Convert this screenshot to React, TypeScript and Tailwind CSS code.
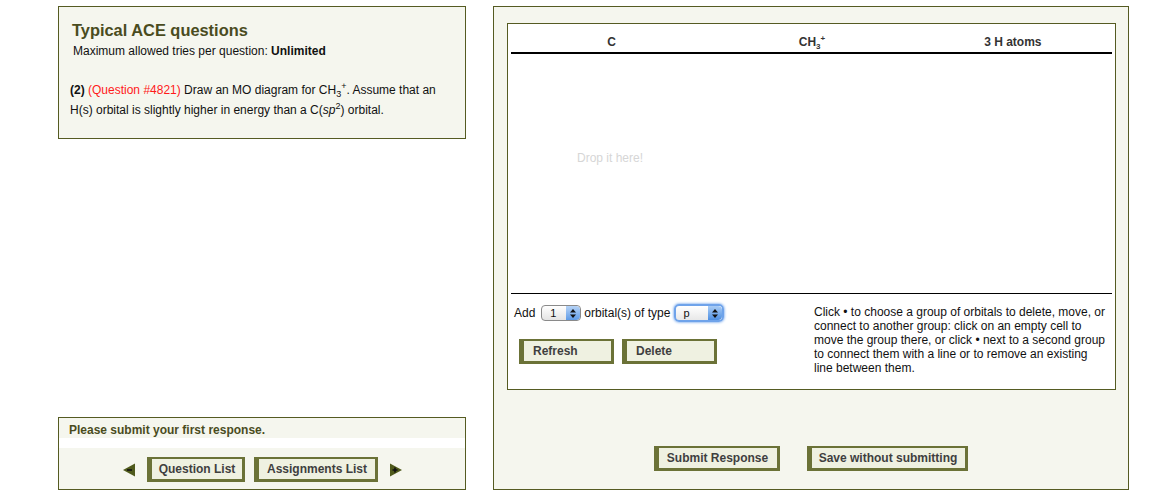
import React from "react";

const font = { fontFamily: '"Liberation Sans", Arial, sans-serif' };

const OliveButton = ({ label, className = "" }: { label: string; className?: string }) => (
  <button
    className={`h-[25px] bg-[#eff1e1] border-[#6b7237] border-l-[5px] border-t-2 border-r-[3px] border-b-[3px] text-[12px] font-bold text-[#3f3f3f] ${className}`}
  >
    {label}
  </button>
);

const Stepper = ({ blue = false }: { blue?: boolean }) => (
  <span
    className={`flex h-full w-[14px] flex-col items-center justify-center rounded-r-[4px] ${
      blue ? "bg-gradient-to-b from-[#a9ccf5] to-[#4d8fe2]" : "bg-gradient-to-b from-[#b6d3f6] to-[#5f9be6]"
    }`}
  >
    <svg width="6" height="9" viewBox="0 0 6 9">
      <path d="M3 0 L6 3.5 L0 3.5 Z" fill="#111" />
      <path d="M3 9 L6 5.5 L0 5.5 Z" fill="#111" />
    </svg>
  </span>
);

const Arrow = ({ dir }: { dir: "left" | "right" }) => (
  <svg width="14" height="14" viewBox="0 0 14 14">
    {dir === "left" ? (
      <>
        <path d="M1 7 L13 0.5 L13 13.5 Z" fill="#4f5a1c" />
        <path d="M5 7 H10" stroke="#111" strokeWidth="1.6" />
      </>
    ) : (
      <>
        <path d="M13 7 L1 0.5 L1 13.5 Z" fill="#4f5a1c" />
        <path d="M3.5 7 H8.5 M6 4.5 V9.5" stroke="#111" strokeWidth="1.6" />
      </>
    )}
  </svg>
);

// CH3+ style formula without sub/sup changing line height
const Sub = ({ children, size = "text-[9px]" }: { children: React.ReactNode; size?: string }) => (
  <span className={`${size} relative top-[3px] leading-none`}>{children}</span>
);
const Sup = ({ children, size = "text-[9px]" }: { children: React.ReactNode; size?: string }) => (
  <span className={`${size} relative -top-[5px] leading-none`}>{children}</span>
);

export default function App() {
  return (
    <div style={font} className="w-[1164px] h-[498px] bg-white flex gap-[27px] pl-[58px] pt-[6px] text-[#111]">
      <div className="w-[408px] h-[484px] flex flex-col justify-between">
        <div className="h-[133px] border border-[#555b22] bg-[#f5f6ee] px-[13px] pt-[13px]">
          <h1 className="text-[16.4px] leading-[20px] font-bold text-[#4a4c1e]">Typical ACE questions</h1>
          <p className="text-[12px] leading-[16px] mt-[3px] ml-px">
            Maximum allowed tries per question: <b>Unlimited</b>
          </p>
          <p className="text-[12px] leading-[20px] mt-[21px] -ml-[2px]">
            <b>(2)</b> <span className="text-[#ff1a1a]">(Question #4821)</span> Draw an MO diagram for CH
            <Sub>3</Sub>
            <Sup>+</Sup>. Assume that an H(s) orbital is slightly higher in energy than a C(
            <i>sp</i>
            <Sup>2</Sup>) orbital.
          </p>
        </div>
        <div className="h-[73px] border border-[#555b22] bg-[#f5f6ee] flex flex-col">
          <div className="h-[19px] pl-[10px] pt-[5px] text-[12px] leading-[14px] font-bold text-[#4a4c1e]">
            Please submit your first response.
          </div>
          <div className="h-[10px] mt-[1px] bg-white" />
          <div className="flex items-center justify-center gap-[9px] mt-[9px] pl-[1px]">
            <span className="mr-[2px]"><Arrow dir="left" /></span>
            <OliveButton label="Question List" className="w-[98px]" />
            <OliveButton label="Assignments List" className="w-[124px]" />
            <span className="ml-[2px]"><Arrow dir="right" /></span>
          </div>
        </div>
      </div>

      <div className="w-[636px] h-[484px] border border-[#555b22] bg-[#f5f6ee] pl-[13px] pr-[12px] pt-[16px] flex flex-col">
        <div className="h-[367px] bg-white border border-[#555b22] px-[3px] flex flex-col">
          <div className="grid grid-cols-3 h-[30px] border-b-2 border-black text-[12px] font-bold text-[#333] items-center pt-[7px]">
            <div className="text-center pl-[1px]">C</div>
            <div className="text-center pl-[1px]">
              CH<Sub size="text-[8px]">3</Sub>
              <Sup size="text-[8px]">+</Sup>
            </div>
            <div className="text-center pl-[2px]">3 H atoms</div>
          </div>
          <div className="h-[240px] border-b border-black pt-[95px] pl-[66px] text-[12px] text-[#d6d6d6]">
            Drop it here!
          </div>
          <div className="flex pt-[10px]">
            <div className="w-[303px] pl-[3px]">
              <div className="flex items-center gap-[3px] text-[12px] h-[18px]">
                <span>Add</span>
                <span className="ml-[3px] flex h-[16px] w-[40px] items-center justify-between rounded-[4px] border border-[#8a8a8a] bg-gradient-to-b from-white to-[#e4e4e4] pl-[8px] text-[11px] overflow-hidden">
                  1<Stepper />
                </span>
                <span>orbital(s) of type</span>
                <span className="ml-[1px] flex h-[18px] w-[50px] items-center justify-between rounded-[5px] border-2 border-[#6fa3ea] shadow-[0_0_3px_#3f86e6] bg-gradient-to-b from-white to-[#e8e8e8] pl-[7px] text-[11px] overflow-hidden">
                  p<Stepper blue />
                </span>
              </div>
              <div className="flex gap-[8px] mt-[17px] ml-[5px]">
                <OliveButton label="Refresh" className="w-[95px] text-left pl-[9px]" />
                <OliveButton label="Delete" className="w-[95px] text-left pl-[9px]" />
              </div>
            </div>
            <div className="text-[12px] leading-[14px] pt-[1px] w-[294px]">
              Click • to choose a group of orbitals to delete, move, or connect to another group: click on an empty cell to move the group there, or click • next to a second group to connect them with a line or to remove an existing line between them.
            </div>
          </div>
        </div>
        <div className="flex justify-center gap-[27px] mt-[56px] pr-[2px]">
          <OliveButton label="Submit Response" className="w-[126px]" />
          <OliveButton label="Save without submitting" className="w-[161px]" />
        </div>
      </div>
    </div>
  );
}
